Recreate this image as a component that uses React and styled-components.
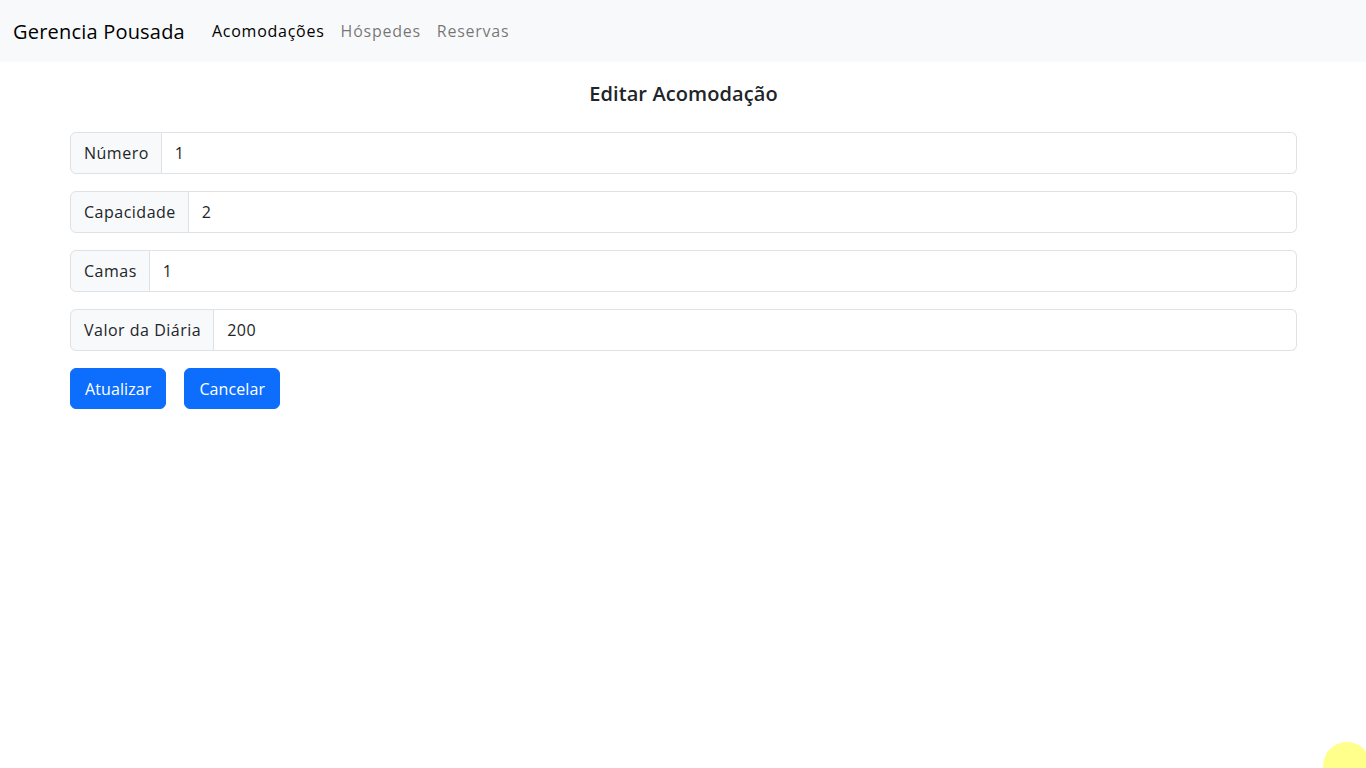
import React from 'react';
import styled, { createGlobalStyle } from 'styled-components';

const GlobalStyle = createGlobalStyle`
  * { box-sizing: border-box; }
  body {
    margin: 0;
    font-family: "Open Sans", "Noto Sans", sans-serif;
    color: #212529;
    background: #fff;
  }
`;

const NavBar = styled.nav`
  height: 62px;
  background-color: #f8f9fa;
  display: flex;
  align-items: center;
  padding: 0 13px;
`;

const Brand = styled.span`
  font-size: 20px;
  letter-spacing: 0.2px;
  color: #000;
  margin-right: 19px;
`;

const NavLink = styled.a`
  font-size: 16px;
  letter-spacing: 0.75px;
  padding: 0 8px;
  color: ${p => (p.active ? '#000' : 'rgba(0,0,0,0.55)')};
  text-decoration: none;
`;

const Main = styled.main`
  padding: 0 69px 0 70px;
`;

const Title = styled.h5`
  margin: 19px 0 25px;
  text-align: center;
  font-size: 20px;
  font-weight: 600;
  letter-spacing: 0.1px;
  line-height: 26px;
`;

const Group = styled.div`
  display: flex;
  height: 42px;
  margin-bottom: 17px;
`;

const Label = styled.span`
  display: flex;
  align-items: center;
  padding: 0 12px 0 13px;
  font-size: 16px;
  letter-spacing: 0.5px;
  background: #f8f9fa;
  border: 1px solid #dee2e6;
  border-radius: 6px 0 0 6px;
  white-space: nowrap;
`;

const Input = styled.input`
  flex: 1;
  border: 1px solid #dee2e6;
  border-left: none;
  border-radius: 0 6px 6px 0;
  padding: 0 12px 0 13px;
  font-size: 16px;
  letter-spacing: 0.5px;
  font-family: inherit;
  color: #212529;
  outline: none;
`;

const Actions = styled.div`
  display: flex;
  gap: 18px;
  margin-top: 1px;
`;

const Button = styled.button`
  height: 41px;
  padding: 0 14px;
  font-size: 16px;
  letter-spacing: 0.1px;
  font-family: inherit;
  color: #fff;
  background: #0d6efd;
  border: 1px solid #0d6efd;
  border-radius: 6px;
  cursor: pointer;
`;

const Blob = styled.div`
  position: fixed;
  left: 1323px;
  top: 742px;
  width: 48px;
  height: 48px;
  border-radius: 50%;
  background: #ffff8c;
`;

const fields = [
  { label: 'Número', value: '1' },
  { label: 'Capacidade', value: '2' },
  { label: 'Camas', value: '1' },
  { label: 'Valor da Diária', value: '200' },
];

const App = () => (
  <>
    <GlobalStyle />
    <NavBar>
      <Brand>Gerencia Pousada</Brand>
      <NavLink href="#" active>Acomodações</NavLink>
      <NavLink href="#">Hóspedes</NavLink>
      <NavLink href="#">Reservas</NavLink>
    </NavBar>
    <Main>
      <Title>Editar Acomodação</Title>
      {fields.map(f => (
        <Group key={f.label}>
          <Label>{f.label}</Label>
          <Input type="text" defaultValue={f.value} />
        </Group>
      ))}
      <Actions>
        <Button>Atualizar</Button>
        <Button>Cancelar</Button>
      </Actions>
    </Main>
    <Blob />
  </>
);

export default App;
